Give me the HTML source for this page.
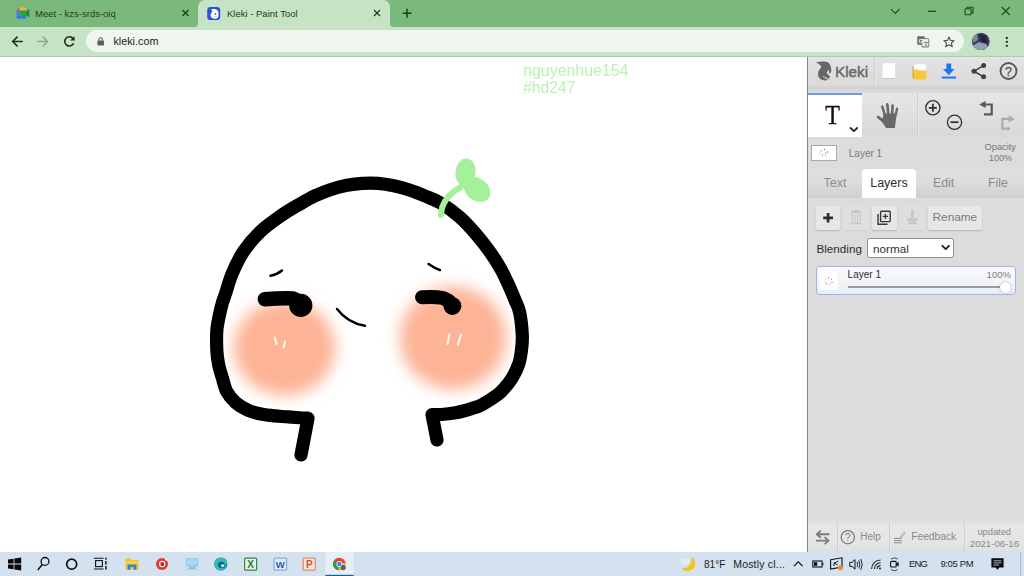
<!DOCTYPE html>
<html><head><meta charset="utf-8"><title>Kleki - Paint Tool</title>
<style>
*{box-sizing:border-box;margin:0;padding:0}
html,body{width:1024px;height:576px;overflow:hidden;background:#fff;font-family:"Liberation Sans",sans-serif;}
.abs{position:absolute}
#tabbar{position:absolute;left:0;top:0;width:1024px;height:27px;background:#7ab97b}
#toolbar{position:absolute;left:0;top:27px;width:1024px;height:29px;background:#c6e3c5}
#tbline{position:absolute;left:0;top:56px;width:1024px;height:1px;background:#b4c9b3}
.tabtxt{position:absolute;top:7.5px;font-size:9.5px;line-height:12px;color:#1f3d21;white-space:nowrap}
#tab2{position:absolute;left:198.4px;top:0;width:191.4px;height:27px;background:#c6e3c5;border-radius:7px 7px 0 0}
#url{position:absolute;left:86px;top:30.2px;width:877.5px;height:22.3px;border-radius:11px;background:#f0f6ef}
#urltxt{position:absolute;left:113.4px;top:35px;font-size:10.8px;line-height:13px;color:#222}
#canvas{position:absolute;left:0;top:57px;width:807px;height:494px;background:#fff;overflow:hidden}

#panel{position:absolute;left:807px;top:57px;width:217px;height:494.5px;background:#dcdcdc;border-left:1px solid #858585;overflow:hidden}
#panel div{position:absolute}
.p{white-space:nowrap;line-height:1}
#row1{left:0;top:0;width:216px;height:29px;background:linear-gradient(#e3e3e3,#dadada)}
#gap1{left:0;top:29px;width:216px;height:7px;background:linear-gradient(#d2d2d2,#dcdcdc)}
#row2{left:0;top:36px;width:216px;height:44px;background:linear-gradient(#e6e6e6,#d9d9d9)}
#tact{left:0;top:36px;width:53.5px;height:44px;background:#fff;border-top:2px solid #6f9ae0}
.vs{width:1px;background:#cfcfcf;box-shadow:1px 0 0 #e8e8e8}
#tabs{left:0;top:112px;width:216px;height:28.5px;background:linear-gradient(#dedede 40%,#cfcfcf)}
#tabl{left:54px;top:112px;width:54px;height:28.5px;background:#fff;border-radius:4px 4px 0 0}
.btn{top:148.6px;height:24px;background:#e7e7e7;border-radius:2px;box-shadow:0 1px 1.5px rgba(0,0,0,.18)}
.btn.dis{background:#dfdfdf;box-shadow:0 1px 1px rgba(0,0,0,.06)}
#sel{left:59px;top:181px;width:87px;height:20.4px;background:#fff;border:1px solid #909090;border-radius:2.5px}
#layer{left:8.4px;top:209.4px;width:200px;height:28.2px;border:1px solid #9fb4ea;border-radius:4px;background:linear-gradient(#fafafa,#f1f4f8 60%,#e6eefb)}
#bot{left:0;top:462px;width:216px;height:33px;background:linear-gradient(#dcdcdc,#e6e6e6 22%,#e5e5e5 70%,#dfdfdf)}

#taskbar{position:absolute;left:0;top:551.5px;width:1024px;height:24.5px;background:#d4e1ee}
.ptxt{position:absolute;color:#777;white-space:nowrap}
</style></head><body>
<div id="tabbar"></div>
<div id="tab2"></div>
<div class="tabtxt" style="left:35px">Meet - kzs-srds-oiq</div>
<div class="tabtxt" style="left:227px">Kleki - Paint Tool</div>
<div id="toolbar"></div><div id="tbline"></div>
<div id="url"></div><div id="urltxt">kleki.com</div>
<svg id="hdr" style="position:absolute;left:0;top:0" width="1024" height="57" viewBox="0 0 1024 57">
<!-- tab flares -->
<path d="M194.4 27 Q198.4 27 198.4 22.6 L198.4 27Z" fill="#c6e3c5"/><path d="M393.8 27 Q389.8 27 389.8 22.6 L389.8 27Z" fill="#c6e3c5"/>
<!-- meet favicon -->
<g>
<path d="M16.5 10 L19.5 7.5 L26 7.5 L26 10.5 L19.5 10.5 Z" fill="#f6bb2c"/>
<path d="M16.5 10 L19.5 10.5 L19.5 16 L16.5 16Z" fill="#3a83f1"/>
<path d="M16.5 16 L26 16 L26 18.8 L18 18.8 Q16.5 18.8 16.5 17.5Z" fill="#2f7de0"/>
<path d="M19.5 10.5 L26 10.5 L26 16 L19.5 16Z" fill="#2ba24c"/>
<path d="M26 11.5 L29.3 8.8 L29.3 17.8 L26 15Z" fill="#1e8e3e"/>
<path d="M16.5 10 L19.5 7.5 L19.5 10.5Z" fill="#e24c3c"/>
</g>
<!-- kleki favicon -->
<rect x="207.2" y="6.9" width="13" height="13.2" rx="3.4" fill="#2c52d8"/>
<path d="M210.4 9.8 C212.6 8.6 216.4 8.6 217.8 10.8 C218.8 12.6 218.8 16 217.8 17.8 C216.6 19.2 213.4 19.2 211.6 17.8 C210.4 16.6 210.2 14.4 211.2 13 C211.8 12.2 212.4 11.6 212.6 11 C212 10.4 211.2 10 210.4 9.8Z" fill="#fff"/>
<circle cx="215.5" cy="13.9" r="0.8" fill="#2c3f9a"/><path d="M213.4 16.4 Q215 17.4 216.6 16.6" stroke="#9fb0ea" stroke-width="0.5" fill="none"/>
<!-- tab closes and plus -->
<g stroke="#1f3d21" stroke-width="1.3" fill="none" stroke-linecap="butt">
<path d="M182.5 10 L188.5 16 M188.5 10 L182.5 16"/>
<path d="M374 10 L380 16 M380 10 L374 16"/>
<path d="M402.5 13.2 L411.5 13.2 M407 8.7 L407 17.7" stroke-width="1.5"/>
</g>
<!-- window controls -->
<g stroke="#1b4a1e" stroke-width="1.1" fill="none">
<path d="M891 9.2 L895.3 13.5 L899.6 9.2"/>
<path d="M928 11.3 L936 11.3" stroke-width="1.3"/>
<rect x="965" y="8.8" width="6" height="6" rx="0.8"/><path d="M967 8.8 L967 7.2 L973 7.2 L973 13 L971 13"/>
<path d="M1001.7 7 L1009.8 15 M1009.8 7 L1001.7 15"/>
</g>
<!-- nav -->
<g stroke="#1c2d1c" stroke-width="1.5" fill="none">
<path d="M22.8 41.5 L12.8 41.5 M17.6 36.6 L12.6 41.5 L17.6 46.4"/>
</g>
<g stroke="#8bab8b" stroke-width="1.4" fill="none">
<path d="M37.3 41.5 L47.3 41.5 M42.6 36.6 L47.6 41.5 L42.6 46.4"/>
</g>
<g>
<path d="M73 38.6 A4.6 4.6 0 1 0 73.6 43.2" stroke="#1c2d1c" stroke-width="1.6" fill="none"/>
<path d="M74.6 36.2 L74.6 40.6 L70.2 40.6Z" fill="#1c2d1c"/>
</g>
<!-- lock -->
<rect x="97.4" y="40.6" width="6.6" height="4.9" rx="0.7" fill="#5b5f5b"/>
<path d="M99 40.8 L99 39.4 A1.7 1.7 0 0 1 102.4 39.4 L102.4 40.8" stroke="#5b5f5b" stroke-width="1.1" fill="none"/>
<!-- translate -->
<rect x="917.2" y="36.2" width="7.6" height="8.6" rx="0.8" fill="#6a6e6a"/>
<rect x="921.8" y="38.6" width="7" height="8.4" rx="0.8" fill="#f0f6ef" stroke="#6a6e6a" stroke-width="0.9"/>
<text x="918.6" y="43" font-size="6" font-weight="bold" fill="#f0f6ef" font-family="Liberation Sans, sans-serif">G</text>
<text x="923.2" y="45.6" font-size="5.5" fill="#5a5e5a" font-family="Liberation Sans, sans-serif">文</text>
<!-- star -->
<path d="M949 37 L950.5 40.4 L954.2 40.7 L951.4 43.1 L952.3 46.8 L949 44.8 L945.7 46.8 L946.6 43.1 L943.8 40.7 L947.5 40.4Z" fill="none" stroke="#4d514d" stroke-width="1.1" stroke-linejoin="round"/>
<!-- avatar -->
<defs><clipPath id="av"><circle cx="980.8" cy="41.4" r="8.7"/></clipPath></defs>
<g clip-path="url(#av)">
<rect x="970" y="30" width="22" height="22" fill="#6a5f9a"/>
<path d="M970 40 L977 34 L984 33 L992 40 L992 52 L970 52Z" fill="#3b3760"/>
<path d="M972 46 L979 42 L986 44 L990 50 L972 52Z" fill="#8fa3b0"/>
<path d="M979 34 L986 36 L987 43 L981 42Z" fill="#25223f"/>
<path d="M972 36 L977 33 L978 40 L973 43Z" fill="#7c8a8c"/>
</g>
<!-- menu -->
<g fill="#262a26"><circle cx="1006.8" cy="38" r="1.15"/><circle cx="1006.8" cy="41.9" r="1.15"/><circle cx="1006.8" cy="45.8" r="1.15"/></g>
</svg>
<div id="canvas"></div>
<svg id="art" style="position:absolute;left:0;top:0" width="807" height="551" viewBox="0 0 807 551">
<defs>
<filter id="bl" x="-30%" y="-30%" width="160%" height="160%"><feGaussianBlur stdDeviation="7.5"/></filter>
</defs>
<ellipse cx="284.5" cy="348" rx="51" ry="47.5" fill="#fdb396" filter="url(#bl)"/>
<ellipse cx="453.2" cy="338" rx="53.5" ry="51.5" fill="#fdb396" filter="url(#bl)"/>
<g fill="none" stroke="#000" stroke-linecap="round" stroke-linejoin="round">
<path stroke-width="13.2" d="M301 455 L308 418.2 C307.0 418.2 305.5 418.2 302.2 418.0 C298.9 417.8 292.9 417.2 288.3 416.9 C283.7 416.5 278.9 416.4 274.4 415.9 C269.8 415.4 265.4 414.9 261.0 414.0 C256.6 413.1 252.2 412.2 248.0 410.3 C243.8 408.4 239.0 405.6 235.5 402.5 C232.0 399.4 229.0 395.8 226.8 391.7 C224.6 387.6 223.7 382.4 222.3 377.8 C220.9 373.2 219.4 368.5 218.5 363.9 C217.6 359.3 217.1 355.9 216.8 350.0 C216.6 344.1 216.2 335.9 217.0 328.6 C217.8 321.3 220.1 311.8 221.5 306.0 C222.9 300.2 223.6 299.4 225.4 294.0 C227.2 288.6 229.3 280.4 232.3 273.3 C235.3 266.2 238.8 258.5 243.5 251.5 C248.2 244.5 254.1 237.6 260.5 231.5 C266.9 225.4 275.4 219.6 282.0 215.0 C288.6 210.4 294.4 207.2 300.0 204.0 C305.6 200.8 310.4 198.0 315.6 195.6 C320.8 193.2 325.8 191.1 331.0 189.4 C336.2 187.7 341.8 186.3 347.0 185.3 C352.2 184.3 357.3 183.7 362.5 183.4 C367.7 183.1 372.8 183.0 378.0 183.4 C383.2 183.8 388.5 184.7 393.8 185.8 C399.0 186.9 404.2 188.3 409.4 190.0 C414.6 191.7 419.8 193.8 425.0 196.0 C430.2 198.2 434.8 199.4 440.6 203.0 C446.4 206.6 454.0 212.1 460.0 217.4 C466.0 222.7 471.5 228.9 476.5 234.7 C481.5 240.5 485.9 246.2 490.0 252.0 C494.1 257.8 497.8 263.6 501.0 269.4 C504.2 275.2 507.1 281.7 509.4 286.8 C511.7 291.9 513.3 295.7 515.0 300.0 C516.7 304.3 518.5 306.8 519.7 312.6 C520.9 318.4 522.0 328.8 522.3 335.0 C522.6 341.2 522.1 345.2 521.5 350.0 C520.9 354.8 520.3 359.3 518.8 363.9 C517.2 368.5 514.6 373.8 512.2 377.8 C509.8 381.8 507.1 385.0 504.6 387.8 C502.2 390.6 501.3 392.0 497.5 394.8 C493.7 397.6 486.2 402.4 482.0 404.7 C477.8 406.9 476.7 407.0 472.5 408.3 C468.3 409.6 462.2 411.5 457.0 412.5 C451.8 413.5 445.4 414.1 441.2 414.5 C437.1 414.9 433.5 414.6 432.0 414.6 L437 440"/>
<path stroke-width="14.4" d="M264.8 299.2 C275 298.4 285 298 293 298.4 L298 301"/>
<circle cx="300.8" cy="305.4" r="8" stroke-width="7.2" fill="#000"/>
<path stroke-width="14" d="M422 297.3 C430 296.7 437 296.8 443 298 L449 301"/>
<circle cx="452.4" cy="306" r="6" stroke-width="6" fill="#000"/>
<path stroke-width="2.6" d="M270.5 275.8 C275 275 279 273 282 270.6"/>
<path stroke-width="2.6" d="M428.6 264 C432 266.4 435.5 268.6 439.8 270"/>
<path stroke-width="2.5" d="M337 309 C344 318 353 324 365 325.7"/>
</g>
<g fill="none" stroke="#fff" stroke-width="2" stroke-linecap="round" opacity="0.92">
<path d="M274.8 337.5 L276.5 344"/><path d="M285 341.5 L283.5 347.5"/>
<path d="M449.4 334 L447.6 344"/><path d="M461 334.6 L458 344.5"/>
</g>
<g fill="#a5f09a" stroke="none">
<path d="M441 215 C441.5 203 448 194 461 187" fill="none" stroke="#a5f09a" stroke-width="6" stroke-linecap="round"/>
<ellipse cx="465.5" cy="172.3" rx="10" ry="14" transform="rotate(6 465.5 172.3)"/>
<ellipse cx="477" cy="189.5" rx="14.5" ry="11" transform="rotate(38 477 189.5)"/>
</g>
<g style="filter:blur(0.45px)"><text x="523.2" y="76.4" font-family="Liberation Sans, sans-serif" font-size="15.9" fill="#b8f4b0">nguyenhue154</text>
<text x="523.2" y="93.4" font-family="Liberation Sans, sans-serif" font-size="15.6" fill="#b8f4b0">#hd247</text></g>
</svg>
<div id="panel">
<div id="row1"></div><div id="gap1"></div><div id="row2"></div><div id="tact"></div>
<div class="vs" style="left:65.5px;top:0;height:29px"></div>
<div class="vs" style="left:108.5px;top:36px;height:44px"></div>
<div class="p" style="left:27px;top:6.6px;font-size:15.3px;color:#686868;-webkit-text-stroke:0.45px #686868">Kleki</div>
<div class="p" style="left:15.8px;top:44.4px;font-family:'Liberation Serif',serif;font-size:28px;color:#111;-webkit-text-stroke:0.35px #111;transform:scaleX(0.86);transform-origin:50% 50%">T</div>
<div class="p" style="left:40.8px;top:91.6px;font-size:10px;color:#7a7a7a">Layer 1</div>
<div class="p" style="left:176.5px;top:85.5px;font-size:9.3px;color:#777">Opacity</div>
<div class="p" style="left:181px;top:96.5px;font-size:9px;color:#777">100%</div>
<div style="left:3.2px;top:88px;width:26px;height:16px;background:#fff;border:1px solid #a9a9a9"></div>
<div id="tabs"></div><div id="tabl"></div>
<div class="p" style="left:15.6px;top:119.8px;font-size:12.5px;color:#8a8a8a">Text</div>
<div class="p" style="left:62.2px;top:119.8px;font-size:12.5px;color:#2b2b2b">Layers</div>
<div class="p" style="left:125px;top:119.8px;font-size:12.3px;color:#8a8a8a">Edit</div>
<div class="p" style="left:180px;top:119.8px;font-size:12.3px;color:#8a8a8a">File</div>
<div class="btn" style="left:8px;width:24.4px"></div>
<div class="btn dis" style="left:36.4px;width:24px"></div>
<div class="btn" style="left:64.4px;width:24.4px"></div>
<div class="btn dis" style="left:92.6px;width:24px"></div>
<div class="btn" style="left:120px;width:54px"></div>
<div class="p" style="left:124.6px;top:154.5px;font-size:11.8px;color:#7b7b7b">Rename</div>
<div class="p" style="left:8.4px;top:185.8px;font-size:11.7px;color:#2e2e2e">Blending</div>
<div id="sel"></div>
<div class="p" style="left:65px;top:185.8px;font-size:11.7px;color:#333">normal</div>
<div id="layer"></div>
<div class="p" style="left:39.6px;top:213.4px;font-size:10px;color:#2f2f2f">Layer 1</div>
<div class="p" style="left:178.6px;top:213.2px;font-size:9.5px;color:#7d7d7d">100%</div>
<div style="left:40px;top:229.2px;width:158px;height:1.6px;background:#9c9c9c"></div>
<div style="left:192px;top:224.6px;width:11.4px;height:11.4px;border-radius:50%;background:#fff;box-shadow:0 0 1.5px rgba(0,0,0,.45)"></div>
<div id="bot"></div>
<div class="vs" style="left:29px;top:464px;height:31px"></div>
<div class="vs" style="left:80.5px;top:464px;height:31px"></div>
<div class="vs" style="left:155.5px;top:464px;height:31px"></div>
<div class="p" style="left:52.2px;top:475.2px;font-size:10px;color:#8a8a8a">Help</div>
<div class="p" style="left:103.2px;top:475.2px;font-size:10.25px;color:#8a8a8a">Feedback</div>
<div class="p" style="left:169.4px;top:471px;font-size:9.3px;color:#8a8a8a">updated</div>
<div class="p" style="left:161.8px;top:481.6px;font-size:9.65px;color:#8a8a8a">2021-06-16</div>
</div>
<svg id="pic" style="position:absolute;left:0;top:0;pointer-events:none" width="1024" height="576" viewBox="0 0 1024 576">
<!-- kleki logo -->
<path d="M815.8 62.4 C820 61.4 826 61 829 63.2 C831.4 66 831.6 70 831 72.6 L828.8 73.4 L829 70 L826.6 72.6 C828 75 829.6 76 830 76.6 C829.6 77.6 829 78.6 828.6 79.4 L823.4 77.2 L828 80 C824 81.2 820 80 818.4 76.6 C817.4 73.4 818.6 69.6 821.4 67 C820.4 64.6 818.4 63.2 815.8 62.4Z" fill="#676767"/>
<path d="M826.6 72.8 L828.9 69.8 L828.8 73.6Z" fill="#e0e0e0"/><path d="M823 76.6 L828.6 79" stroke="#dedede" stroke-width="0.9" fill="none"/>
<!-- new -->
<rect x="882.6" y="63.2" width="12.4" height="14.8" fill="#fff"/><rect x="882.6" y="78" width="12.4" height="0.8" fill="#c4c4c4"/>
<!-- folder -->
<path d="M913 66.5 L915.5 64.2 L925.6 64.2 L925.6 70 L913 70Z" fill="#fff"/>
<path d="M912.4 66.6 L913.6 66 L914.2 79.2 L912.6 78.6Z" fill="#e0a92c"/>
<path d="M913.6 79.4 L914.6 69.6 L918 69.6 L919 70.8 L926.6 70.8 L926.4 78.4 Q926.3 79.4 925.2 79.4Z" fill="#f6c63c"/>
<!-- download -->
<path d="M946.4 63.4 L951.2 63.4 L951.2 69 L954.6 69 L948.8 75.2 L943 69 L946.4 69Z" fill="#1a79ee"/>
<rect x="941.8" y="76.6" width="14.2" height="2" fill="#1a79ee"/>
<!-- share -->
<g fill="#414141"><circle cx="974" cy="71.2" r="2.5"/><circle cx="983.6" cy="65.6" r="2.5"/><circle cx="983.6" cy="76.8" r="2.5"/></g>
<path d="M983.6 65.6 L974 71.2 L983.6 76.8" stroke="#414141" stroke-width="1.5" fill="none"/>
<!-- help top -->
<circle cx="1008.5" cy="71" r="8" fill="none" stroke="#575757" stroke-width="1.8"/>
<text x="1008.5" y="75.6" text-anchor="middle" font-family="Liberation Sans, sans-serif" font-size="12.5" fill="#575757" stroke="#575757" stroke-width="0.3">?</text>
<!-- tool chevron -->
<path d="M850.6 128 L853.9 131.2 L857.2 128" stroke="#222" stroke-width="1.8" fill="none" stroke-linecap="round" stroke-linejoin="round"/>
<!-- hand -->
<g stroke="#686868" stroke-linecap="round" fill="none">
<path d="M882.3 106.6 L885.6 117" stroke-width="2.5"/>
<path d="M887.3 104.4 L888.7 117" stroke-width="2.6"/>
<path d="M892.6 105.4 L892 117" stroke-width="2.5"/>
<path d="M897.1 108.6 L895 118" stroke-width="2.3"/>
<path d="M878.2 117 L885.5 123" stroke-width="2.9"/>
</g>
<path d="M883.6 113.5 L896 113.5 L896 119 L894.9 128 L886.2 128 L881.5 121.2 L883 117Z" fill="#686868"/>
<!-- zoom -->
<g stroke="#2f2f2f" fill="none">
<circle cx="932.9" cy="107.8" r="7.1" stroke-width="1.3"/><path d="M928.9 107.8 L936.9 107.8 M932.9 103.8 L932.9 111.8" stroke-width="1.7"/>
<circle cx="954.5" cy="122.2" r="7.1" stroke-width="1.3"/><path d="M950.5 122.2 L958.5 122.2" stroke-width="1.7"/>
</g>
<!-- undo / redo -->
<path d="M984.8 104.5 L991.7 104.5 L991.7 114.3 L984 114.3" stroke="#5a5a5a" stroke-width="2.2" fill="none"/>
<path d="M979.2 104.5 L985.6 100.9 L985.6 108.1Z" fill="#5a5a5a"/>
<path d="M1009 118.9 L1002.4 118.9 L1002.4 128.6 L1010 128.6" stroke="#ababab" stroke-width="2.2" fill="none"/>
<path d="M1014.7 118.9 L1008.6 115.3 L1008.6 122.5Z" fill="#ababab"/>
<!-- layer previews -->
<g id="mini1"><circle cx="821" cy="151" r="0.7" fill="#d88"/><circle cx="824.4" cy="149.6" r="0.6" fill="#555"/><circle cx="827.6" cy="152" r="0.7" fill="#c66"/><circle cx="822.4" cy="155" r="0.6" fill="#555"/><circle cx="826" cy="155.4" r="0.7" fill="#e99"/><circle cx="820" cy="153.4" r="0.6" fill="#e9a"/><circle cx="825.6" cy="153" r="0.5" fill="#333"/></g>
<rect x="819.6" y="271" width="18" height="19" fill="#fff" opacity="0.85"/>
<g><circle cx="826" cy="279" r="0.6" fill="#d88"/><circle cx="828.6" cy="277.8" r="0.55" fill="#555"/><circle cx="831.4" cy="279.6" r="0.6" fill="#c66"/><circle cx="826.6" cy="283.8" r="0.55" fill="#555"/><circle cx="830" cy="284.4" r="0.6" fill="#e99"/><circle cx="825" cy="281.6" r="0.55" fill="#e9a"/><circle cx="832" cy="282.4" r="0.5" fill="#333"/></g>
<!-- layer buttons -->
<path d="M823.2 217.8 L833 217.8 M828.1 213 L828.1 222.6" stroke="#2d2d2d" stroke-width="2.7" fill="none"/>
<g stroke="#c3c3c3" fill="none" stroke-width="1"><rect x="852.2" y="212.4" width="8" height="11.2"/><path d="M850.8 211.6 L861.6 211.6 M854.4 210.4 L859 210.4 M855 214 L855 222.4 M857.6 214 L857.6 222.4"/></g>
<g stroke="#3a3a3a" fill="none" stroke-width="1.4"><rect x="880.6" y="211.2" width="9.6" height="10.4" rx="0.8"/><path d="M878 214 L878 224.2 L887.6 224.2"/><path d="M882.8 216.4 L888 216.4 M885.4 213.8 L885.4 219"/></g>
<g fill="#c6c6c6"><path d="M911.2 210.6 Q912.4 209.4 913.6 210.6 L913.8 217.6 L911 217.6Z"/><ellipse cx="912.4" cy="219.6" rx="5.4" ry="1.9"/><ellipse cx="912.4" cy="223" rx="4.6" ry="1.4"/></g>
<!-- select chevron -->
<path d="M942.4 245.8 L945.7 249.2 L949 245.8" stroke="#222" stroke-width="1.8" fill="none" stroke-linecap="round" stroke-linejoin="round"/>
<!-- bottom bar -->
<g stroke="#7c7c7c" stroke-width="1.9" fill="none" stroke-linecap="round" stroke-linejoin="round">
<path d="M828.6 534.2 L817 534.2 M820.2 531.2 L816.8 534.2 L820.2 537.2"/>
<path d="M816.6 540.6 L828.4 540.6 M825.2 537.6 L828.6 540.6 L825.2 543.6"/>
</g>
<circle cx="847.8" cy="537.2" r="6.6" fill="none" stroke="#7c7c7c" stroke-width="1.3"/>
<text x="847.8" y="540.8" text-anchor="middle" font-family="Liberation Sans, sans-serif" font-size="10" fill="#7c7c7c">?</text>
<g stroke="#8a8a8a" stroke-width="1" fill="none"><path d="M894 538.4 L901.6 538.4 M894 540.6 L901.6 540.6 M894 542.8 L901.6 542.8"/></g>
<path d="M899.4 537.4 L904 531.2 L906 532.4 L901.6 538.6Z" fill="#bdbdbd"/>
</svg>
<div id="taskbar"></div>
<svg id="tb" style="position:absolute;left:0;top:0;pointer-events:none" width="1024" height="576" viewBox="0 0 1024 576">
<!-- active app highlight -->
<rect x="325.4" y="552" width="28.2" height="24" fill="#e7eff7"/>
<rect x="325.4" y="574.8" width="28.2" height="1.2" fill="#1160aa"/>
<!-- windows -->
<g fill="#0a0a0a"><path d="M8 559.5 L13.6 558.7 L13.6 563.6 L8 563.6Z"/><path d="M14.4 558.6 L21.2 557.6 L21.2 563.6 L14.4 563.6Z"/><path d="M8 564.4 L13.6 564.4 L13.6 569.3 L8 568.5Z"/><path d="M14.4 564.4 L21.2 564.4 L21.2 570.4 L14.4 569.4Z"/></g>
<!-- search -->
<circle cx="45" cy="561.4" r="3.9" fill="none" stroke="#111" stroke-width="1.3"/><path d="M42.4 564.4 L37.8 570" stroke="#111" stroke-width="1.5"/>
<!-- cortana -->
<circle cx="71.7" cy="564.2" r="5" fill="none" stroke="#111" stroke-width="1.7"/>
<!-- task view -->
<g stroke="#111" fill="none" stroke-width="1.1"><rect x="95.6" y="560.6" width="6.8" height="6"/><path d="M94 558.2 L103.6 558.2 M94 569 L103.6 569"/></g>
<g fill="#111"><rect x="105.2" y="557.6" width="1.4" height="2"/><rect x="105.2" y="561" width="1.4" height="3.6"/><rect x="105.2" y="566" width="1.4" height="3.6"/></g>
<!-- explorer -->
<path d="M125.4 558.6 L130.6 558.6 L131.6 560 L138.6 560 L138.6 569.6 L125.4 569.6Z" fill="#f4c22f"/>
<path d="M125.4 561.6 L138.6 561.6 L138.6 563.4 L125.4 563.4Z" fill="#f9d75e"/>
<path d="M127.6 564.4 L136.4 564.4 L136.4 569.8 L133.6 569.8 L133.6 567 L130.4 567 L130.4 569.8 L127.6 569.8Z" fill="#2f86d8"/>
<!-- red app -->
<circle cx="162" cy="564" r="6" fill="#e03a2c"/><circle cx="162.2" cy="564" r="3.2" fill="#fff"/><path d="M160.4 562 L164.2 562.6 L163.8 566.2 L160.6 565.8Z" fill="#b8271c"/>
<path d="M164.8 558.6 L167.4 558.8 L166.2 561.2Z" fill="#fff"/>
<!-- monitor -->
<rect x="185.8" y="558" width="12.4" height="8.4" rx="0.6" fill="#8ec8ef"/><rect x="186.6" y="558.8" width="10.8" height="6" fill="#a9d8f6"/>
<rect x="188.6" y="567.4" width="7" height="1.2" fill="#5fa0d6"/>
<rect x="185" y="569.4" width="13.6" height="0.8" fill="#b9c9dc"/>
<!-- edge -->
<circle cx="220.8" cy="564" r="6.6" fill="#1b84c9"/>
<path d="M214.6 562.6 C216 558 222 556.4 226 559.4 C227.6 561 227.6 563 226.6 564.2 L220 564.2 C220 566.6 223 568.8 226.6 567 C224 571.6 216 571.6 214.4 565.6Z" fill="#2fc2a0"/>
<path d="M218 564.4 C218 561.8 222.6 560.8 224.4 563 C224.6 564 224 564.8 223.2 565 L221 565 C221.2 566.8 223 568 225.4 567.4 C221.6 569.6 217.8 567.6 218 564.4Z" fill="#0c59a4"/>
<circle cx="222.6" cy="565.6" r="1.7" fill="#d4e1ee"/>
<!-- excel -->
<rect x="244.6" y="558.2" width="12" height="12" rx="1" fill="#e6f2e6" stroke="#2f8a45" stroke-width="1.2"/>
<text x="250.6" y="568" text-anchor="middle" font-family="Liberation Sans, sans-serif" font-weight="bold" font-size="10" fill="#1f7a37">X</text>
<!-- word -->
<rect x="274" y="558.2" width="12.6" height="12" rx="1" fill="#dfe9f8" stroke="#8fa9d6" stroke-width="1.2"/>
<text x="280.3" y="568" text-anchor="middle" font-family="Liberation Sans, sans-serif" font-weight="bold" font-size="9.5" fill="#1f5bb5">W</text>
<!-- ppt -->
<rect x="303.2" y="558.2" width="12" height="12" rx="1" fill="#fbe6dc" stroke="#e08a63" stroke-width="1.2"/>
<text x="309.4" y="568" text-anchor="middle" font-family="Liberation Sans, sans-serif" font-weight="bold" font-size="10" fill="#d2501e">P</text>
<!-- chrome -->
<circle cx="339.3" cy="564" r="6.3" fill="#e34334"/>
<path d="M339.3 564 L333.9 560.8 A6.3 6.3 0 0 0 338.4 570.2Z" fill="#2ea04f"/>
<path d="M339.3 564 L338.4 570.2 A6.3 6.3 0 0 0 345.5 563 L342 563Z" fill="#f5c02c"/>
<circle cx="339.3" cy="564" r="2.9" fill="#fff"/><circle cx="339.3" cy="564" r="2.2" fill="#3f83ec"/>
<circle cx="343.2" cy="567.6" r="2.6" fill="#5d5a7d"/>
<!-- weather -->
<ellipse cx="685" cy="561.6" rx="4.6" ry="3.2" fill="#e3ebf3"/>
<path d="M691.4 557 C696.8 560 696.6 568.4 690.6 570.6 C687.2 571.6 683.4 570.6 681.4 568 C687.6 569 692.8 563.6 691.4 557Z" fill="#f5c518"/>
<!-- tray chevron -->
<path d="M794 566.2 L798.3 561.8 L802.6 566.2" stroke="#111" stroke-width="1.2" fill="none"/>
<!-- battery -->
<rect x="812.8" y="561" width="9.2" height="6" fill="none" stroke="#111" stroke-width="1.1"/><rect x="814" y="562.2" width="3.2" height="3.6" fill="#111"/><rect x="822.4" y="562.8" width="1" height="2.4" fill="#111"/>
<!-- network -->
<path d="M830.6 559.8 L842 557.8 L842 567 L830.6 569Z" fill="none" stroke="#111" stroke-width="1.1"/>
<path d="M834 563 L838.4 561.4 M834 563 L837.6 565 M834 563 L834 566" stroke="#111" stroke-width="0.9" fill="none"/>
<circle cx="840.4" cy="567.8" r="2.5" fill="#f58a1f"/>
<!-- volume -->
<path d="M849.8 562.4 L852 562.4 L855 559.6 L855 569.2 L852 566.4 L849.8 566.4Z" fill="none" stroke="#111" stroke-width="1"/>
<path d="M857 562 Q858.4 564.4 857 566.8 M858.8 560.4 Q861 564.4 858.8 568.4 M860.8 559 Q863.6 564.4 860.8 569.8" stroke="#111" stroke-width="0.9" fill="none"/>
<!-- wifi -->
<g stroke="#222" fill="none" stroke-width="1.1"><path d="M871.6 569 A9 9 0 0 1 880.6 560"/><path d="M874.4 569 A6.2 6.2 0 0 1 880.6 562.8"/><path d="M877.2 569 A3.4 3.4 0 0 1 880.6 565.6"/></g><circle cx="880" cy="568.6" r="1" fill="#222"/>
<!-- meet now -->
<rect x="890.6" y="561.4" width="5.6" height="5.6" rx="1" fill="none" stroke="#111" stroke-width="1.1"/><path d="M896.6 563 L898.6 562 L898.6 566.6 L896.6 565.6Z" fill="#111"/>
<path d="M891 559 Q894.4 556.6 897.6 559 M891 569.6 Q894.4 572 897.6 569.6" stroke="#333" stroke-width="0.9" fill="none"/>
<!-- notification -->
<path d="M991.4 558.2 L1003.6 558.2 L1003.6 567.6 L999.4 567.6 L997.5 569.8 L995.6 567.6 L991.4 567.6Z" fill="#0a0a0a"/>
<path d="M993.6 560.8 L1001.4 560.8 M993.6 562.9 L1001.4 562.9 M993.6 565 L999 565" stroke="#d4e1ee" stroke-width="0.8"/>
<rect x="1020" y="552" width="0.8" height="24" fill="#9fb0c0"/>
<g font-family="Liberation Sans, sans-serif" fill="#1c1c1c">
<text x="704" y="568.4" font-size="10.1">81°F</text>
<text x="733.2" y="568.4" font-size="10.5" letter-spacing="0.2">Mostly cl...</text>
<text x="909" y="567.2" font-size="9.5" letter-spacing="-0.9">ENG</text>
<text x="940.4" y="567.2" font-size="9.5" letter-spacing="-0.35">9:05 PM</text>
</g>
</svg>
</body></html>
